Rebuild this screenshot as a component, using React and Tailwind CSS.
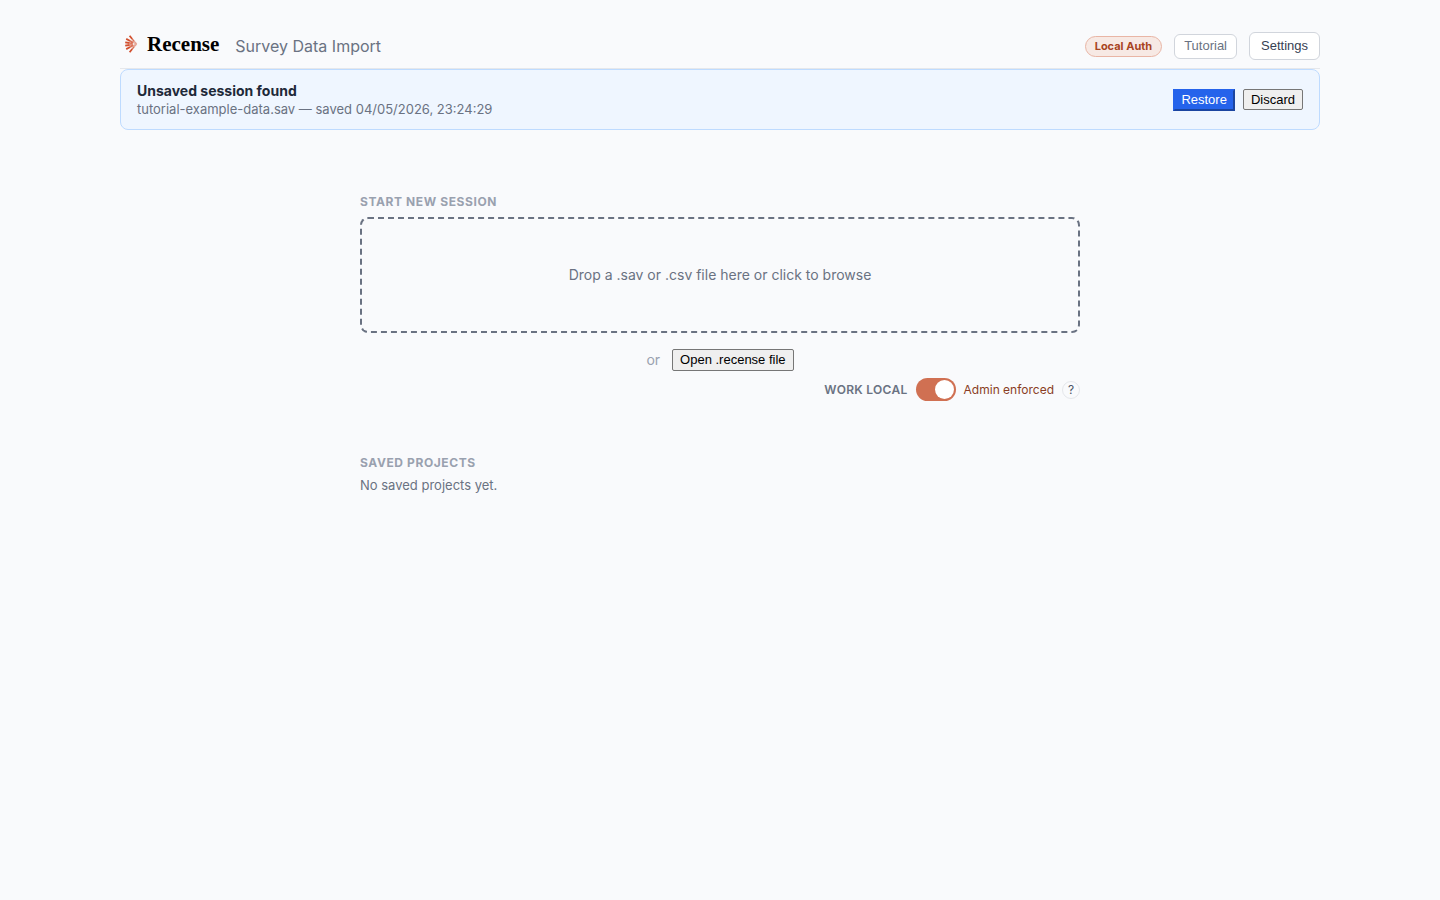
import { useState } from "react";

function LogoMark() {
  return (
    <svg className="h-5 w-5" viewBox="0 0 20 20" fill="none" stroke="#d2502f" aria-hidden="true">
      <path strokeWidth="1.8" d="M6.6 1.7 9.2 5M3.2 4.9 7.2 7M2.2 8.3 6.6 9M2.2 11.7 6.6 11M3.2 15.1 7.2 13M6.6 18.3 9.2 15" />
      <path strokeWidth="1.4" opacity="0.8" d="M9.2 5 11.1 7.2M7.2 7 10.2 8.5M6.6 9 9.8 9.5M6.6 11 9.8 10.5M7.2 13 10.2 11.5M9.2 15 11.1 12.8" />
      <path strokeWidth="1.1" opacity="0.5" d="M11.1 7.2 13.8 9.8M10.2 8.5 13.4 9.9M10.2 11.5 13.4 10.1M11.1 12.8 13.8 10.2" />
    </svg>
  );
}

function Header() {
  return (
    <header className="flex items-center justify-between border-b border-gray-200 pb-2">
      <div className="flex items-center gap-4">
        <a href="#" className="flex items-center gap-1 pb-1 pl-[3px] text-black">
          <LogoMark />
          <span className="font-['Liberation_Serif',serif] text-[21px] leading-6 font-bold">Recense</span>
        </a>
        <h1 className="text-base leading-6 text-gray-500">Survey Data Import</h1>
      </div>
      <div className="flex items-center gap-3">
        <span className="rounded-full border border-[#e9b5a5] bg-[#f7e9e4] px-[9px] py-px text-[11px] leading-[17px] font-bold text-[#a8441f]">
          Local Auth
        </span>
        <button type="button" className="h-[25px] rounded-md border border-gray-300 bg-white px-[9px] font-['Liberation_Sans',sans-serif] text-[13px] leading-4 text-gray-500">
          Tutorial
        </button>
        <button type="button" className="h-7 rounded-md border border-gray-300 bg-white px-[11px] font-['Liberation_Sans',sans-serif] text-[13px] leading-4 text-gray-700">
          Settings
        </button>
      </div>
    </header>
  );
}

function SessionBanner() {
  return (
    <section className="flex items-center justify-between rounded-lg border border-blue-200 bg-[#eff6ff] px-4 py-[11px]">
      <div>
        <h2 className="text-sm leading-5 font-bold text-gray-800">Unsaved session found</h2>
        <p className="text-[13px] leading-[17px] text-gray-500">tutorial-example-data.sav — saved 04/05/2026, 23:24:29</p>
      </div>
      <div className="flex items-center gap-2">
        <button type="button" className="h-[22px] border-2 border-t-[#2563eb] border-r-[#1b45a0] border-b-[#1b45a0] border-l-[#2563eb] bg-[#2563eb] px-1.5 font-['Liberation_Sans',sans-serif] text-[13px] leading-4 text-white">
          Restore
        </button>
        <button type="button" className="h-[21px] rounded-xs border border-[#767676] bg-[#efefef] px-[7px] font-['Liberation_Sans',sans-serif] text-[13px] leading-4 text-black">
          Discard
        </button>
      </div>
    </section>
  );
}

function WorkLocal() {
  const [on, setOn] = useState(true);
  return (
    <div className="mt-[7px] flex items-center justify-end gap-2 text-xs leading-4">
      <label htmlFor="work-local" className="font-semibold tracking-wide text-gray-500">WORK LOCAL</label>
      <input
        id="work-local"
        type="checkbox"
        role="switch"
        checked={on}
        onChange={() => setOn(!on)}
        className="flex h-[23px] w-10 appearance-none items-center rounded-full bg-gray-300 px-0.5 before:h-[19px] before:w-[19px] before:rounded-full before:bg-white checked:justify-end checked:bg-[#d07052]"
      />
      <span className="text-[#8a3d24]">Admin enforced</span>
      <button type="button" aria-label="About working locally" className="h-[18px] w-[18px] rounded-full border border-gray-200 text-xs leading-4 text-gray-600">
        ?
      </button>
    </div>
  );
}

export default function App() {
  return (
    <div className="min-h-screen bg-[#f9fafc] px-6 py-8 font-['Inter',sans-serif]">
      <div className="mx-auto max-w-[1200px]">
        <Header />
        <SessionBanner />
        <main className="mx-auto mt-16 max-w-[720px]">
          <section>
            <h2 className="text-xs leading-4 font-bold tracking-wider text-gray-400">START NEW SESSION</h2>
            <label className="mt-[7px] block cursor-pointer rounded-lg border-2 border-dashed border-gray-500 py-[46px] text-center text-sm leading-5 text-gray-500">
              Drop a .sav or .csv file here or click to browse
              <input type="file" accept=".sav,.csv" className="sr-only" />
            </label>
            <div className="mt-4 flex items-center justify-center gap-3">
              <span className="text-sm leading-5 text-gray-400">or</span>
              <button type="button" className="h-[22px] rounded-xs border border-[#767676] bg-[#efefef] px-[7px] font-['Liberation_Sans',sans-serif] text-[13px] leading-4 text-black">
                Open .recense file
              </button>
            </div>
            <WorkLocal />
          </section>
          <section className="mt-[54px]">
            <h2 className="text-xs leading-4 font-bold tracking-wider text-gray-400">SAVED PROJECTS</h2>
            <p className="mt-1 text-[13px] leading-5 text-gray-500">No saved projects yet.</p>
          </section>
        </main>
      </div>
    </div>
  );
}
